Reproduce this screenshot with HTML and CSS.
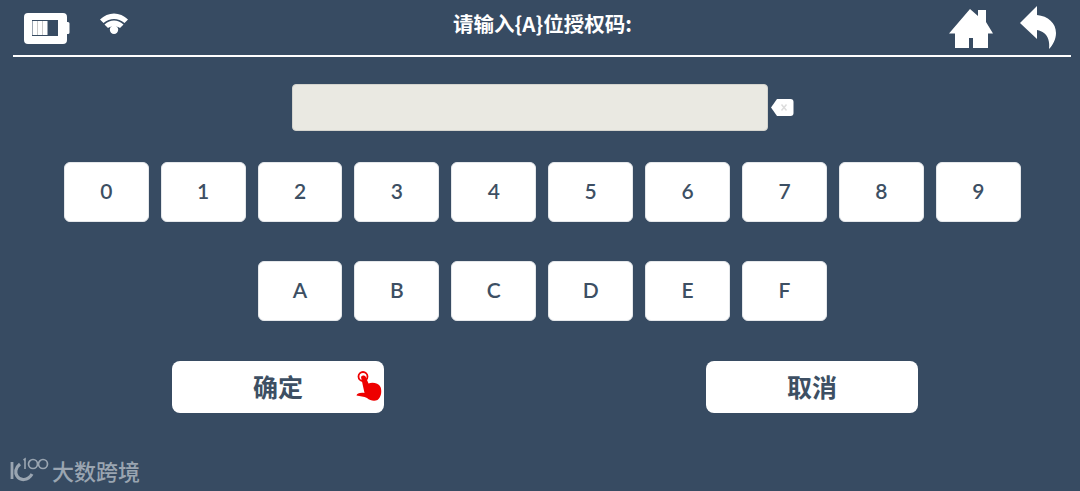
FILE: index.html
```html
<!DOCTYPE html>
<html lang="zh">
<head>
<meta charset="utf-8">
<title>授权码</title>
<link rel="stylesheet" href="styles.css">
</head>
<body>
<div class="screen">
  <header class="topbar">
    <div class="status">
      <svg class="battery" width="46" height="32" viewBox="0 0 46 32">
        <path d="M4 1H39a4 4 0 0 1 4 4V10h1a1.500 1.500 0 0 1 1.500 1.500V20.500a1.500 1.500 0 0 1-1.500 1.500H43V28a4 4 0 0 1-4 4H4a4 4 0 0 1-4-4V5a4 4 0 0 1 4-4Z" fill="#fff"/>
        <rect x="8" y="8" width="26" height="16" fill="#374b62"/>
        <rect x="8.500" y="9" width="15" height="14" fill="#fff"/>
        <rect x="13" y="9" width="1" height="14" fill="#c9c9c9"/>
        <rect x="18" y="9" width="1" height="14" fill="#c9c9c9"/>
      </svg>
      <svg class="wifi" width="28" height="21" viewBox="0 0 28 21">
        <path d="M0 6.500C8-1.500 20-1.500 28 6.500L24.500 10C18 4.500 10 4.500 3.500 10Z" fill="#fff"/>
        <path d="M4.500 11.500C10.500 6 17.500 6 23.500 11.500L20 15C16.500 12.500 11.500 12.500 8 15Z" fill="#fff"/>
        <circle cx="14" cy="16.800" r="4.200" fill="#fff"/>
      </svg>
    </div>
    <h1 class="title">请输入{A}位授权码:</h1>
    <div class="actions">
      <svg class="home" width="46" height="42" viewBox="0 0 46 42">
        <path d="M22 2 30 9V3H38V15L45 26.500H40V41H25V31H21V41H7V26.500H1Z" fill="#fff"/>
      </svg>
      <svg class="back" width="38" height="44" viewBox="0 0 38 44">
        <path d="M0 17 17 0V9C28 10 36 17 36 27C36 33 33 39 29 43C30 36 28 30 24 27C22 25.500 20 24.500 17 24V33Z" fill="#fff"/>
      </svg>
    </div>
  </header>

  <div class="entry">
    <div class="field"></div>
    <svg class="erase" width="24" height="19" viewBox="0 0 24 19">
      <path d="M7 1H20.500a3 3 0 0 1 3 3V15a3 3 0 0 1-3 3H7L1 9.500Z" fill="#fff"/>
      <path d="M11.500 6.500 16.500 12.500M16.500 6.500 11.500 12.500" stroke="#dcdcdc" stroke-width="1.500"/>
    </svg>
  </div>

  <div class="keys">
    <button class="key">0</button>
    <button class="key">1</button>
    <button class="key">2</button>
    <button class="key">3</button>
    <button class="key">4</button>
    <button class="key">5</button>
    <button class="key">6</button>
    <button class="key">7</button>
    <button class="key">8</button>
    <button class="key">9</button>
    <button class="key key-first-letter">A</button>
    <button class="key">B</button>
    <button class="key">C</button>
    <button class="key">D</button>
    <button class="key">E</button>
    <button class="key">F</button>
  </div>

  <div class="commands">
    <button class="command">确定
      <svg class="hand" width="30" height="34" viewBox="0 0 30 34">
        <circle cx="8" cy="7.500" r="4.500" fill="none" stroke="#ee0000" stroke-width="1.800"/>
        <path d="M6 8C7 6 10 6 10.800 8L13.500 14.500C17.500 13 23.500 14 25.500 18C27 22 26.500 28 22.500 31C19 32.500 15 31.500 12 29C9 27.500 5 27 1.500 26.500C2 24.500 4.500 23.500 9.500 24Z" fill="#ee0000"/>
      </svg>
    </button>
    <button class="command">取消</button>
  </div>

  <footer class="mark">
    <svg class="mark-logo" width="40" height="26" viewBox="0 0 40 26">
      <g fill="none" stroke="#9aa5b1">
        <path d="M3 5V22" stroke-width="2.800"/>
        <path d="M11 7C6 11 6 16 8 19C11 24 19 24 23 17" stroke-width="3.200"/>
        <path d="M14.500 3 16 2V12" stroke-width="1.600"/>
        <circle cx="24" cy="7" r="4.500" stroke-width="1.700"/>
        <circle cx="34" cy="7" r="4.500" stroke-width="1.700"/>
      </g>
    </svg>
    <span class="mark-text">大数跨境</span>
  </footer>
</div>
</body>
</html>
```

FILE: styles.css
```css
* {
  box-sizing: border-box;
}

html,
body {
  margin: 0;
  height: 100%;
}

body {
  background: #374b62;
  overflow: hidden;
  font-family: Lato, "Noto Sans CJK SC", sans-serif;
}

.screen {
  width: 1080px;
  height: 491px;
  display: flex;
  flex-direction: column;
  padding: 0 9px 0 13px;
}

.topbar {
  height: 57px;
  border-bottom: 2px solid #fff;
  display: grid;
  grid-template-columns: 1fr auto 1fr;
  align-items: center;
  padding: 0 0 0 11px;
}

.status {
  display: flex;
  align-items: center;
  gap: 30px;
}

.wifi {
  margin-top: -9px;
}

.title {
  margin: -9px 10px 0 0;
  color: #fff;
  font-size: 20.500px;
  font-weight: 700;
  font-family: "Noto Sans CJK SC", Lato, sans-serif;
  white-space: nowrap;
}

.actions {
  display: flex;
  justify-content: flex-end;
  align-items: center;
  gap: 26px;
  padding-right: 13px;
}

.entry {
  display: flex;
  align-items: center;
  gap: 2px;
  margin: 27px 0 0 279px;
}

.field {
  width: 476px;
  height: 47px;
  background: #eae9e2;
  border: 1px solid #d4d4ce;
  border-radius: 4px;
}

.keys {
  display: grid;
  grid-template-columns: repeat(10, 84.900px);
  grid-auto-rows: 60px;
  gap: 39px 12px;
  margin: 31px 0 0 50.800px;
}

.key {
  border: 1px solid #e4e7ea;
  border-radius: 6px;
  background: #fff;
  color: #3d4f63;
  font-family: Lato, sans-serif;
  font-size: 21px;
  font-weight: 600;
  padding: 0 0 4px;
}

.key-first-letter {
  grid-column-start: 3;
}

.commands {
  display: flex;
  gap: 322px;
  margin: 40px 0 0 159px;
}

.command {
  position: relative;
  width: 212px;
  height: 52px;
  border: 0;
  border-radius: 8px;
  background: #fff;
  color: #3d4f63;
  font-family: "Noto Sans CJK SC", sans-serif;
  font-size: 25px;
  font-weight: 700;
  padding: 0 0 2px;
}

.hand {
  position: absolute;
  top: 8px;
  right: -1px;
}

.mark {
  display: flex;
  align-items: center;
  gap: 3px;
  margin: 44px 0 0 -4px;
}

.mark-text {
  color: #9aa5b1;
  font-family: "Noto Sans CJK SC", sans-serif;
  font-size: 22px;
  font-weight: 500;
  line-height: 26px;
}
```
